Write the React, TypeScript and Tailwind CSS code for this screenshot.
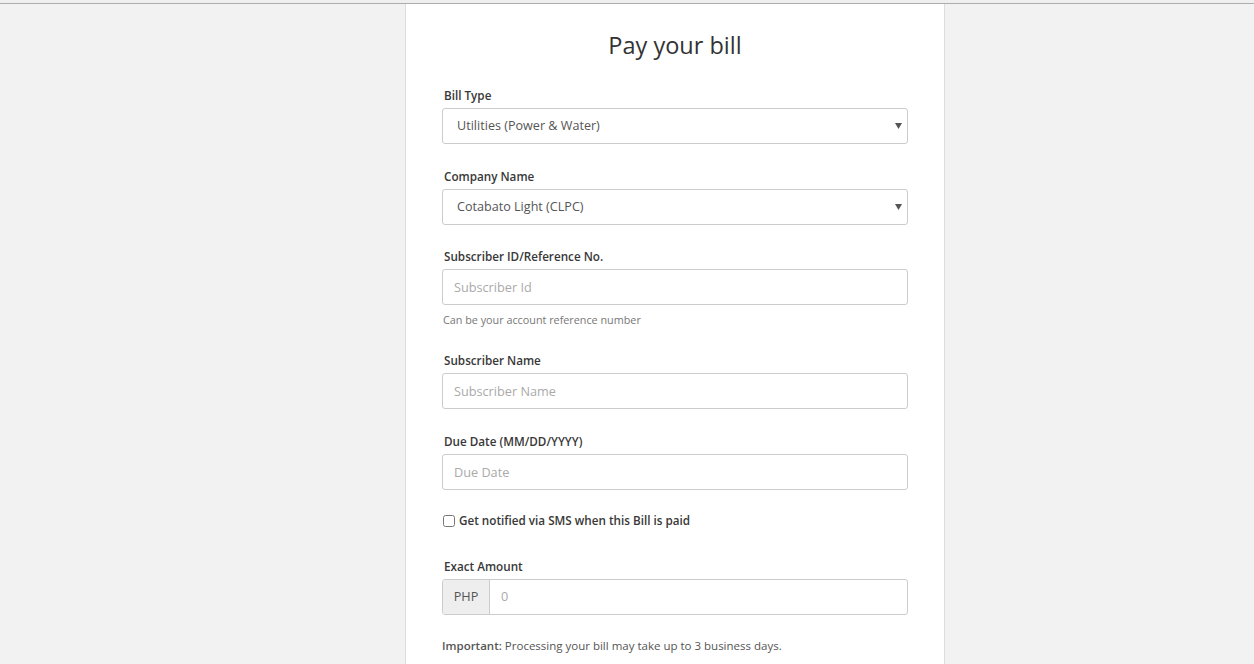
import React from 'react';

const font = { fontFamily: '"Open Sans", "Liberation Sans", sans-serif' };

function Label({ children }: { children: React.ReactNode }) {
  return (
    <label className="block pl-[2px] mb-[4px] text-[11.7px] leading-[17px] font-semibold text-[#383838]">
      {children}
    </label>
  );
}

function Select({ value }: { value: string }) {
  return (
    <div className="relative">
      <select
        defaultValue={value}
        className="block w-full h-[36px] appearance-none rounded-[3px] border border-[#ccc] bg-white pl-[14px] pr-8 text-[12.6px] text-[#555] outline-none"
      >
        <option>{value}</option>
      </select>
      <svg
        className="pointer-events-none absolute right-[6px] top-[15px]"
        width="7"
        height="6"
        viewBox="0 0 7 6"
      >
        <path d="M0 0h7L3.5 6z" fill="#555" />
      </svg>
    </div>
  );
}

function TextInput({ placeholder }: { placeholder: string }) {
  return (
    <input
      placeholder={placeholder}
      className="block w-full h-[36px] rounded-[3px] border border-[#ccc] bg-white px-[11px] text-[12.7px] text-[#555] placeholder:text-[#aaa] outline-none"
    />
  );
}

export default function App() {
  return (
    <div className="min-h-[664px] bg-[#f2f2f2]" style={font}>
      <div className="h-[4px] bg-[#efefef] border-b border-[#adadad]" />
      <div className="ml-[405px] w-[540px] min-h-[660px] border-x border-[#ddd] bg-white px-[36px] pt-[24px]">
        <h1 className="text-center text-[23.5px] leading-[34px] font-normal text-[#333] mb-[25px]">
          Pay your bill
        </h1>

        <form>
          <div className="mb-[24px]">
            <Label>Bill Type</Label>
            <Select value="Utilities (Power & Water)" />
          </div>

          <div className="mb-[23px]">
            <Label>Company Name</Label>
            <Select value="Cotabato Light (CLPC)" />
          </div>

          <div className="mb-[25px]">
            <Label>Subscriber ID/Reference No.</Label>
            <TextInput placeholder="Subscriber Id" />
            <p className="mt-[7px] pl-[1px] text-[10.8px] leading-[15px] text-[#777]">
              Can be your account reference number
            </p>
          </div>

          <div className="mb-[24px]">
            <Label>Subscriber Name</Label>
            <TextInput placeholder="Subscriber Name" />
          </div>

          <div>
            <Label>Due Date (MM/DD/YYYY)</Label>
            <TextInput placeholder="Due Date" />
          </div>

          <label className="mt-[22px] mb-[29px] flex items-center gap-[4px] pl-[1px] text-[11.7px] leading-[17px] font-semibold text-[#383838]">
            <input type="checkbox" className="m-0 h-[12px] w-[12px]" />
            Get notified via SMS when this Bill is paid
          </label>

          <div className="mb-[23px]">
            <Label>Exact Amount</Label>
            <div className="flex h-[36px] rounded-[3px] border border-[#ccc] overflow-hidden">
              <span className="flex w-[47px] shrink-0 items-center justify-center border-r border-[#ccc] bg-[#eee] text-[12.7px] text-[#555]">
                PHP
              </span>
              <input
                placeholder="0"
                className="flex-1 min-w-0 px-[11px] text-[12.7px] text-[#555] placeholder:text-[#aaa] outline-none"
              />
            </div>
          </div>

          <p className="text-[11.5px] leading-[16px] text-[#555]">
            <span className="font-semibold">Important:</span> Processing your bill may take up to 3 business days.
          </p>
        </form>
      </div>
    </div>
  );
}
